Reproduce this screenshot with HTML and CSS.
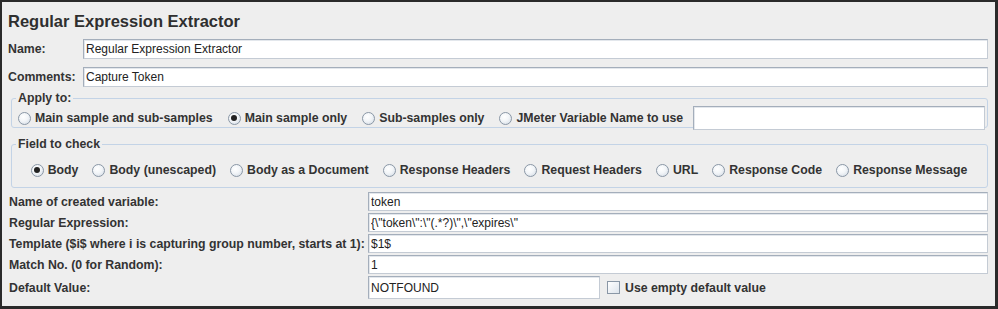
FILE: index.html
```html
<!DOCTYPE html>
<html>
<head>
<title>Regular Expression Extractor</title>
<link rel="stylesheet" href="styles.css">
</head>
<body>
<div class="panel">
	<div class="title">Regular Expression Extractor</div>
	<div class="row">
		<label class="lbl">Name:</label>
		<input class="txt" type="text" value="Regular Expression Extractor">
	</div>
	<div class="row">
		<label class="lbl">Comments:</label>
		<input class="txt" type="text" value="Capture Token">
	</div>
	<fieldset class="group apply">
		<legend>Apply to:</legend>
		<div class="opts">
			<span class="opt"><span class="radio"></span>Main sample and sub-samples</span>
			<span class="opt"><span class="radio on"></span>Main sample only</span>
			<span class="opt"><span class="radio"></span>Sub-samples only</span>
			<span class="opt"><span class="radio"></span>JMeter Variable Name to use</span>
			<input class="txt varname" type="text" value="">
		</div>
	</fieldset>
	<fieldset class="group field">
		<legend>Field to check</legend>
		<div class="opts centered">
			<span class="opt"><span class="radio on"></span>Body</span>
			<span class="opt"><span class="radio"></span>Body (unescaped)</span>
			<span class="opt"><span class="radio"></span>Body as a Document</span>
			<span class="opt"><span class="radio"></span>Response Headers</span>
			<span class="opt"><span class="radio"></span>Request Headers</span>
			<span class="opt"><span class="radio"></span>URL</span>
			<span class="opt"><span class="radio"></span>Response Code</span>
			<span class="opt"><span class="radio"></span>Response Message</span>
		</div>
	</fieldset>
	<div class="grid">
		<label class="glbl">Name of created variable:</label>
		<input class="txt" type="text" value="token">
		<label class="glbl">Regular Expression:</label>
		<input class="txt" type="text" value='{\"token\":\"(.*?)\",\"expires\"'>
		<label class="glbl">Template ($i$ where i is capturing group number, starts at 1):</label>
		<input class="txt" type="text" value="$1$">
		<label class="glbl">Match No. (0 for Random):</label>
		<input class="txt" type="text" value="1">
		<label class="glbl">Default Value:</label>
		<div class="defrow">
			<input class="txt def" type="text" value="NOTFOUND">
			<span class="check"></span>
			<span class="chklbl">Use empty default value</span>
		</div>
	</div>
</div>
</body>
</html>
```

FILE: styles.css
```css
body{
	margin:0;
	background:#fff;
	font-family:"Liberation Sans", Arial, sans-serif;
}
.panel{
	width:998px;
	height:309px;
	box-sizing:border-box;
	border:2px solid #2a2a2a;
	border-right-width:3px;
	border-bottom-width:3px;
	background:#eeeeee;
	color:#333;
	padding:0 7px 0 6px;
}
.title{
	font-size:16.5px;
	font-weight:bold;
	line-height:20px;
	padding-top:9px;
	color:#2f2f2f;
}
.row{
	display:flex;
	align-items:center;
	height:20px;
	margin-top:8px;
}
.lbl{
	width:75px;
	font-size:12.3px;
	font-weight:bold;
}
.txt{
	flex:1;
	min-width:0;
	height:20px;
	box-sizing:border-box;
	margin:0;
	padding:0 2px;
	border:1px solid #a4aebb;
	border-right-color:#c4cbd4;
	border-bottom-color:#c4cbd4;
	box-shadow:inset 1px 1px 0 #e3e7ec;
	background:#fff;
	font-family:"Liberation Sans", Arial, sans-serif;
	font-size:12px;
	color:#222;
	outline:none;
}
.group{
	min-width:0;
	margin:4px 0 0 3px;
	padding:0 2px 0 5px;
	border:1px solid #c3d3e6;
	border-radius:3px;
}
.group legend{
	font-size:12.3px;
	font-weight:bold;
	padding:0 2px;
	margin-left:-1px;
	line-height:14px;
}
.apply{
	height:37px;
	box-sizing:border-box;
}
.field{
	margin-top:9px;
	height:51px;
	box-sizing:border-box;
}
.opts{
	display:flex;
	align-items:center;
	font-size:12.3px;
	font-weight:bold;
	gap:14px;
}
.apply .opts{
	margin-top:1px;
	height:24px;
	gap:15px;
	padding-left:1px;
}
.field .opts{
	margin-top:12px;
	justify-content:center;
	padding-right:4px;
}
.opt{
	display:flex;
	align-items:center;
	white-space:nowrap;
}
.radio{
	width:11px;
	height:11px;
	border-radius:50%;
	border:1px solid #8a97a6;
	background:radial-gradient(circle at 40% 35%, #ffffff 0%, #f2f5f8 45%, #cfd8e2 100%);
	margin-right:4px;
	position:relative;
}
.radio.on::after{
	content:"";
	position:absolute;
	left:2.5px;
	top:2.5px;
	width:6px;
	height:6px;
	border-radius:50%;
	background:#222;
}
.varname{
	height:24px;
	margin-left:-5px;
	margin-right:0;
}
.grid{
	display:grid;
	grid-template-columns:360px 1fr;
	row-gap:2px;
	margin-top:4px;
	align-items:center;
}
.grid .txt{
	height:19px;
}
.glbl{
	font-size:12.3px;
	font-weight:bold;
	margin-left:1px;
	white-space:nowrap;
}
.defrow{
	display:flex;
	align-items:center;
}
.grid .def{
	flex:none;
	width:232px;
	height:23px;
}
.check{
	width:13px;
	height:13px;
	box-sizing:border-box;
	border:1px solid #8a97a6;
	background:linear-gradient(135deg, #ffffff, #dde4ec);
	margin-left:7px;
	margin-right:5px;
}
.chklbl{
	font-size:12.3px;
	font-weight:bold;
}
```
